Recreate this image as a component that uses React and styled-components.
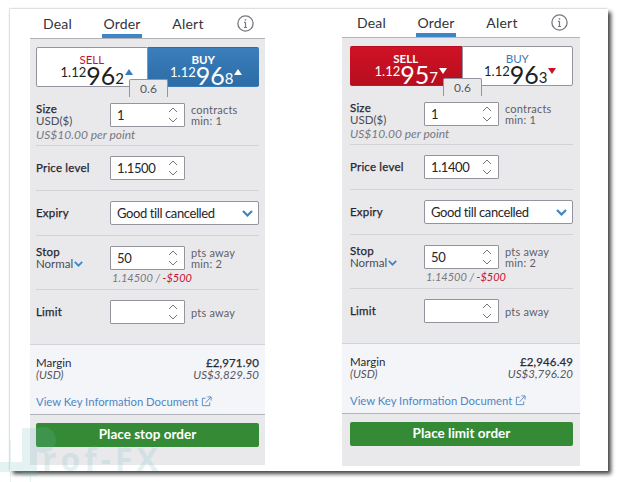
import React from "react";
import styled, { createGlobalStyle } from "styled-components";

const Global = createGlobalStyle`
  * { box-sizing: border-box; }
  html, body { margin: 0; padding: 0; background: #fff; }
  body { width: 619px; height: 482px; overflow: hidden; font-family: "Lato", "Open Sans", sans-serif; color: #2a2a33; }
`;

const tickets = [
  {
    top: 1, height: 427, width: 235, pad: "0 6px", gap: 77, tabPad: 0,
    sell: { small: "1.12", big: "96", tail: "2", dir: "up" },
    buy: { small: "1.12", big: "96", tail: "8", dir: "up" },
    active: "buy", price: "1.1500", sub: "1.14500", margin: "£2,971.90", usd: "US$3,829.50", action: "Place stop order",
  },
  {
    top: 0, height: 429, width: 238, pad: "0 7px 0 8px", gap: 0, tabPad: 2,
    sell: { small: "1.12", big: "95", tail: "7", dir: "down" },
    buy: { small: "1.12", big: "96", tail: "3", dir: "down" },
    active: "sell", price: "1.1400", sub: "1.14500", margin: "£2,946.49", usd: "US$3,796.20", action: "Place limit order",
  },
];

const Ticket = ({ t }) => (
  <Column $top={t.top} $width={t.width} $gap={t.gap}>
    <Tabs $pad={t.tabPad}>
      <Tab $w={55}>Deal</Tab>
      <Tab $w={40} $ml={17} $active>Order</Tab>
      <Tab $w={46} $ml={23}>Alert</Tab>
      <InfoIcon />
    </Tabs>
    <Panel $height={t.height}>
      <Form $pad={t.pad}>
        <Pair>
          <Side $filled={t.active === "sell"} $tone="sell" $left>
            <SideLabel $filled={t.active === "sell"} $tone="sell">SELL</SideLabel>
            <Quote q={t.sell} filled={t.active === "sell"} tone="sell" />
          </Side>
          <Side $filled={t.active === "buy"} $tone="buy">
            <SideLabel $filled={t.active === "buy"} $tone="buy">BUY</SideLabel>
            <Quote q={t.buy} filled={t.active === "buy"} tone="buy" />
          </Side>
          <Spread>0.6</Spread>
        </Pair>

        <SizeRow>
          <Line>
            <Labels>
              <Label>Size</Label>
              <SubLabel>USD($)</SubLabel>
            </Labels>
            <Num value="1" />
            <Hint>contracts<br />min: 1</Hint>
          </Line>
          <Note>US$10.00 per point</Note>
        </SizeRow>

        <Row $h={45}>
          <Line>
            <Labels><Label>Price level</Label></Labels>
            <Num value={t.price} />
          </Line>
        </Row>

        <Row $h={45}>
          <Line>
            <Labels><Label>Expiry</Label></Labels>
            <Select>
              Good till cancelled
              <Chevron width="11" height="7" />
            </Select>
          </Line>
        </Row>

        <Row $h={54}>
          <Line>
            <Labels>
              <Label>Stop</Label>
              <SubLabel>Normal<Chevron width="9" height="6" /></SubLabel>
            </Labels>
            <Num value="50" />
            <Hint>pts away<br />min: 2</Hint>
          </Line>
          <StopNote>{t.sub} / <Loss>-$500</Loss></StopNote>
        </Row>

        <Row $h={53} $last>
          <Line>
            <Labels><Label>Limit</Label></Labels>
            <Num value="" />
            <Hint>pts away</Hint>
          </Line>
        </Row>
      </Form>

      <MarginBox $pad={t.pad}>
        <MarginRow>
          <span>Margin</span>
          <MarginValue>{t.margin}</MarginValue>
        </MarginRow>
        <MarginRow $muted>
          <em>(USD)</em>
          <em>{t.usd}</em>
        </MarginRow>
        <KidLink>
          View Key Information Document
          <svg width="11" height="11" viewBox="0 0 12 12" fill="none" stroke="#4f86c6" strokeWidth="1">
            <path d="M5 2.5H1.5V10.5H9.5V7" />
            <path d="M5 7.5L10.5 1.5M7 1H11V5" />
          </svg>
        </KidLink>
      </MarginBox>

      <Footer $pad={t.pad}>
        <Place>{t.action}</Place>
      </Footer>
    </Panel>
  </Column>
);

const Quote = ({ q, filled, tone }) => (
  <QuoteLine $tone={tone}>
    <QuoteSmall>{q.small}</QuoteSmall>
    <QuoteBig>{q.big}</QuoteBig>
    <QuoteTail>{q.tail}</QuoteTail>
    <Arrow $dir={q.dir} $color={filled ? "#fff" : q.dir === "down" ? "#c8102e" : "#3a7cb8"} />
  </QuoteLine>
);

const Num = ({ value }) => (
  <NumBox>
    <NumValue>{value}</NumValue>
    <Stepper>
      <svg width="10" height="18" viewBox="0 0 10 18" fill="none" stroke="#777" strokeWidth="1">
        <path d="M1 6L5 2L9 6" />
        <path d="M1 12L5 16L9 12" />
      </svg>
    </Stepper>
  </NumBox>
);

const InfoIcon = () => (
  <InfoWrap>
    <svg width="17" height="17" viewBox="0 0 17 17" fill="none" stroke="#77777f">
      <circle cx="8.5" cy="8.5" r="7.6" strokeWidth="1.3" />
      <path d="M8.5 7.2V12.5M7 7.4H8.5M7 12.5H10" strokeWidth="1.2" />
      <path d="M8.5 4.2V5.6" strokeWidth="1.5" />
    </svg>
  </InfoWrap>
);

const Chevron = (props) => (
  <ChevronSvg viewBox="0 0 11 7" fill="none" stroke="#3d85c6" strokeWidth="2.2" {...props}>
    <path d="M1 1L5.5 5.5L10 1" />
  </ChevronSvg>
);

export default function App() {
  return (
    <>
      <Global />
      <Frame>
        {tickets.map((t) => (
          <Ticket key={t.action} t={t} />
        ))}
        <Watermark>
          <svg width="60" height="72" viewBox="0 0 60 72" fill="#6fbcbc">
            <rect x="22" y="18" width="15" height="48" />
            <circle cx="43" cy="30" r="13" />
            <rect x="0" y="52" width="30" height="10" />
            <rect x="10" y="30" width="1" height="42" />
            <rect x="30" y="60" width="1" height="12" />
          </svg>
          <WatermarkText>rof-FX</WatermarkText>
        </Watermark>
      </Frame>
    </>
  );
}

const Frame = styled.div`
  position: relative;
  display: flex;
  align-items: flex-start;
  width: 598px;
  height: 462px;
  margin: 9px 0 0 10px;
  padding-left: 20px;
  background: #fff;
  box-shadow: 3px 3px 4px #444, -1px -1px 1px #e6e6e6;
`;

const Column = styled.section`
  width: ${(p) => p.$width}px;
  margin-top: ${(p) => p.$top}px;
  margin-right: ${(p) => p.$gap}px;
`;

const Tabs = styled.nav`
  position: relative;
  display: flex;
  height: 28px;
  padding-left: ${(p) => p.$pad}px;
`;

const Tab = styled.div`
  width: ${(p) => p.$w}px;
  margin-left: ${(p) => p.$ml || 0}px;
  text-align: center;
  font-size: 14px;
  line-height: 27px;
  letter-spacing: 0.2px;
  color: #33333b;
  border-bottom: 4px solid ${(p) => (p.$active ? "#3d85c6" : "transparent")};
`;

const InfoWrap = styled.div`
  margin-left: 26px;
  padding-top: 5px;
  line-height: 0;
`;

const Panel = styled.div`
  height: ${(p) => p.$height}px;
  display: flex;
  flex-direction: column;
  background: #e9e9ec;
  border-top: 1px solid #b3b3bb;
`;

const Form = styled.div`
  height: 305px;
  padding: ${(p) => p.$pad};
  padding-top: 8px;
`;

const Pair = styled.div`
  position: relative;
  display: flex;
  height: 40px;
`;

const Side = styled.div`
  flex: 1;
  text-align: center;
  padding-top: 5px;
  border: 1px solid ${(p) => (p.$filled ? "transparent" : "#94949e")};
  border-radius: ${(p) => (p.$left ? "2px 0 0 2px" : "0 2px 2px 0")};
  background: ${(p) =>
    p.$filled
      ? p.$tone === "sell"
        ? "linear-gradient(#d01226, #b60e1e)"
        : "linear-gradient(#3a7ebb, #2d6ca6)"
      : "#fff"};
  color: ${(p) => (p.$filled ? "#fff" : "#1f1f26")};
`;

const SideLabel = styled.div`
  font-size: 11.5px;
  line-height: 13px;
  font-weight: ${(p) => (p.$filled ? 700 : 400)};
  color: ${(p) => (p.$filled ? "#fff" : p.$tone === "sell" ? "#c8102e" : "#3a7cb8")};
`;

const QuoteLine = styled.div`
  display: flex;
  justify-content: center;
  align-items: flex-start;
  height: 21px;
  padding-left: ${(p) => (p.$tone === "sell" ? 10 : 6)}px;
`;

const QuoteSmall = styled.span`
  font-size: 13px;
  line-height: 13px;
`;

const QuoteBig = styled.span`
  font-size: 25px;
  line-height: 22px;
  margin-top: -2px;
`;

const QuoteTail = styled.span`
  font-size: 15px;
  line-height: 15px;
  margin-top: 5px;
`;

const Arrow = styled.i`
  width: 0;
  height: 0;
  margin: 3px 0 0 1px;
  border-left: 4px solid transparent;
  border-right: 4px solid transparent;
  ${(p) =>
    p.$dir === "up"
      ? `border-bottom: 6px solid ${p.$color};`
      : `border-top: 6px solid ${p.$color};`}
`;

const Spread = styled.div`
  position: absolute;
  left: 93px;
  top: 32px;
  width: 39px;
  height: 18px;
  padding-top: 2px;
  text-align: center;
  font-size: 12px;
  line-height: 14px;
  color: #55555e;
  background: #e9e9ec;
  border: 1px solid #94949e;
  border-bottom: none;
  border-radius: 2px 2px 0 0;
`;

const Row = styled.div`
  height: ${(p) => p.$h}px;
  padding-top: 10px;
  border-bottom: ${(p) => (p.$last ? "none" : "1px solid #d2d2d8")};
`;

const SizeRow = styled(Row)`
  height: 43px;
  margin-top: 16px;
  padding-top: 0;
  border-bottom: 1px solid #d2d2d8;
`;

const Line = styled.div`
  display: flex;
  align-items: center;
  height: 24px;
`;

const Labels = styled.div`
  width: 74px;
  flex: none;
`;

const Label = styled.div`
  font-size: 11.5px;
  line-height: 12px;
  letter-spacing: 0.2px;
  -webkit-text-stroke: 0.25px #26262e;
  color: #26262e;
`;

const SubLabel = styled.div`
  display: flex;
  align-items: center;
  gap: 1px;
  font-size: 11.5px;
  line-height: 12px;
  color: #4c4c55;
`;

const NumBox = styled.div`
  display: flex;
  align-items: center;
  justify-content: space-between;
  width: 75px;
  height: 24px;
  padding: 0 6px;
  background: #fff;
  border: 1px solid #94949e;
  border-radius: 1px;
`;

const NumValue = styled.span`
  font-size: 13px;
  letter-spacing: -0.4px;
  color: #25252c;
`;

const Stepper = styled.span`
  line-height: 0;
`;

const Hint = styled.div`
  margin-left: 6px;
  font-size: 11px;
  line-height: 11px;
  letter-spacing: 0.2px;
  color: #5f5f68;
`;

const Note = styled.div`
  margin-top: 1px;
  font-size: 12px;
  line-height: 13px;
  font-style: italic;
  color: #77777f;
`;

const StopNote = styled(Note)`
  margin: 1px 0 0 76px;
  font-size: 11px;
`;

const Loss = styled.span`
  color: #c8102e;
`;

const Select = styled.div`
  flex: 1;
  display: flex;
  align-items: center;
  justify-content: space-between;
  height: 24px;
  padding: 0 5px 0 6px;
  font-size: 13px;
  letter-spacing: -0.4px;
  color: #25252c;
  background: #fff;
  border: 1px solid #94949e;
  border-radius: 2px;
`;

const ChevronSvg = styled.svg`
  flex: none;
`;

const MarginBox = styled.div`
  height: 71px;
  padding: ${(p) => p.$pad};
  padding-top: 12px;
  background: #f4f5f8;
  border-top: 1px solid #d2d2d8;
  border-bottom: 1px solid #b3b3bb;
`;

const MarginRow = styled.div`
  display: flex;
  justify-content: space-between;
  font-size: 11.5px;
  line-height: 12px;
  color: ${(p) => (p.$muted ? "#55555e" : "#2a2a33")};
`;

const MarginValue = styled.span`
  letter-spacing: 0.1px;
  -webkit-text-stroke: 0.25px #2a2a33;
`;

const KidLink = styled.div`
  display: flex;
  align-items: center;
  gap: 3px;
  margin-top: 14px;
  font-size: 11.3px;
  line-height: 13px;
  color: #4f86c6;
`;

const Footer = styled.div`
  padding: ${(p) => p.$pad};
  padding-top: 8px;
`;

const Place = styled.div`
  height: 24px;
  text-align: center;
  font-size: 13.5px;
  line-height: 23px;
  font-weight: 700;
  color: #fff;
  background: #348a35;
  border-radius: 2px;
`;

const Watermark = styled.div`
  position: absolute;
  left: -10px;
  top: 401px;
  opacity: 0.18;
  pointer-events: none;
`;

const WatermarkText = styled.div`
  position: absolute;
  left: 42px;
  top: 37px;
  font-family: "Open Sans", sans-serif;
  font-size: 32px;
  line-height: 24px;
  font-weight: 700;
  letter-spacing: 4px;
  white-space: nowrap;
  color: #6fbcbc;
`;
